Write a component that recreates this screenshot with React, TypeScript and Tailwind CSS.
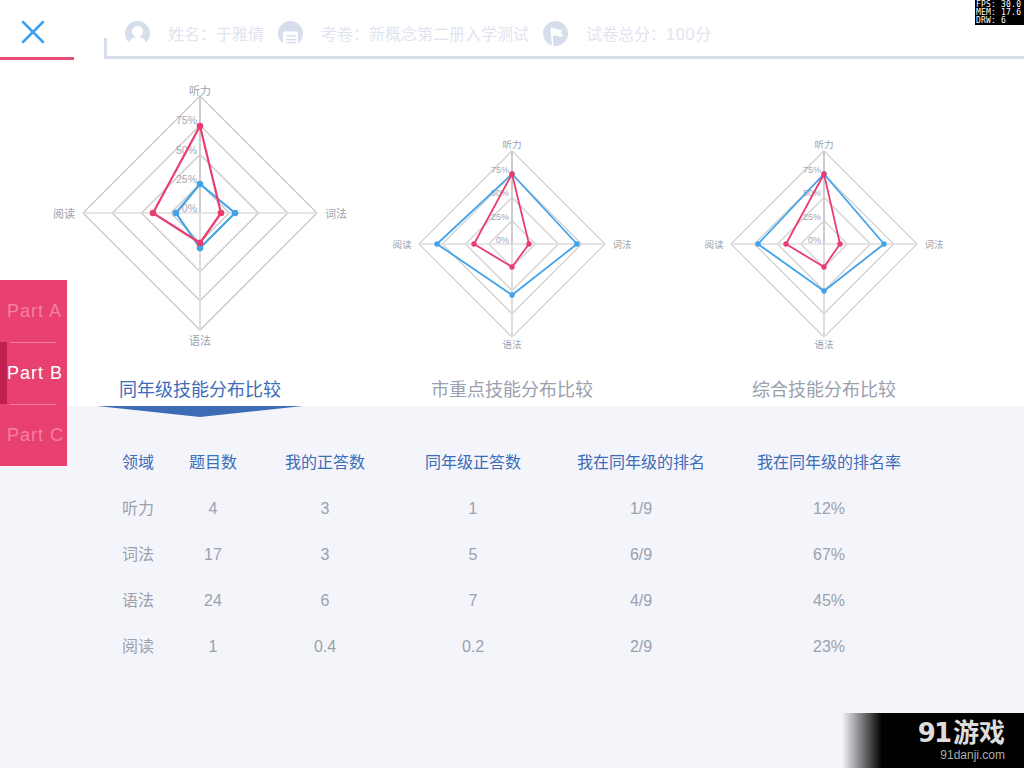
import React from 'react';

const sans = '"Liberation Sans", "Noto Sans CJK SC", sans-serif';

type Pts = { top: number; right: number; bottom: number; left: number };

const toPoints = (p: Pts, cx: number, cy: number): [number, number][] => [
  [cx, cy - p.top],
  [cx + p.right, cy],
  [cx, cy + p.bottom],
  [cx - p.left, cy],
];

const Series = ({ pts, color, dot }: { pts: [number, number][]; color: string; dot: number }) => (
  <g>
    <polygon points={pts.map((p) => p.join(',')).join(' ')} fill="none" stroke={color} strokeWidth={dot > 3 ? 2.2 : 1.8} strokeLinejoin="round" />
    {pts.map((p, i) => (
      <circle key={i} cx={p[0]} cy={p[1]} r={dot} fill={color} />
    ))}
  </g>
);

const Radar = ({
  cy,
  r,
  labelSize,
  pctSize,
  topGap,
  bottomGap,
  sideGap,
  gridColor,
  pctYs,
  blue,
  red,
  dot,
}: {
  cy: number;
  r: number;
  labelSize: number;
  pctSize: number;
  topGap: number;
  bottomGap: number;
  sideGap: number;
  gridColor: string;
  pctYs: number[];
  blue: Pts;
  red: Pts;
  dot: number;
}) => {
  const cx = 156;
  return (
    <svg width={312} height={318} viewBox="0 0 312 318" style={{ fontFamily: sans }}>
      {[0.25, 0.5, 0.75, 1].map((k) => {
        const d = r * k;
        return (
          <polygon
            key={k}
            points={`${cx},${cy - d} ${cx + d},${cy} ${cx},${cy + d} ${cx - d},${cy}`}
            fill="none"
            stroke={gridColor}
            strokeWidth={1.3}
          />
        );
      })}
      <line x1={cx} y1={cy - r} x2={cx} y2={cy} stroke="#cccccc" strokeWidth={2} />
      <line x1={cx} y1={cy} x2={cx} y2={cy + r} stroke="#dddddd" strokeWidth={2} />
      <line x1={cx - r} y1={cy} x2={cx + r} y2={cy} stroke="#dddddd" strokeWidth={1.5} />
      {['0%', '25%', '50%', '75%'].map((t, i) => (
        <text key={t} x={cx - 3} y={pctYs[i]} textAnchor="end" fontSize={pctSize} fill="#a3a8b5">
          {t}
        </text>
      ))}
      <text x={cx} y={cy - r - topGap} textAnchor="middle" fontSize={labelSize} fill="#9ba1ae">听力</text>
      <text x={cx} y={cy + r + bottomGap} textAnchor="middle" fontSize={labelSize} fill="#9ba1ae">语法</text>
      <text x={cx - r - sideGap} y={cy + labelSize / 2 - 1} textAnchor="end" fontSize={labelSize} fill="#9ba1ae">阅读</text>
      <text x={cx + r + sideGap} y={cy + labelSize / 2 - 1} fontSize={labelSize} fill="#9ba1ae">词法</text>
      <Series pts={toPoints(blue, cx, cy)} color="#43a3e8" dot={dot} />
      <Series pts={toPoints(red, cx, cy)} color="#e93d70" dot={dot} />
    </svg>
  );
};

const UserIcon = () => (
  <svg width={25} height={25} viewBox="0 0 25 25" className="shrink-0">
    <circle cx={12.5} cy={12.5} r={12.5} fill="#d6deec" />
    <circle cx={12.5} cy={10.5} r={5.5} fill="#fff" />
    <path d="M4 22c1-4 4-6 8.5-6s7.500 2 8.500 6c-2 2-5 3-8.500 3s-6.500-1-8.500-3z" fill="#fff" />
  </svg>
);

const PaperIcon = () => (
  <svg width={25} height={25} viewBox="0 0 25 25" className="shrink-0">
    <circle cx={12.5} cy={12.5} r={12.5} fill="#d6deec" />
    <path d="M5 11.5a1 1 0 0 1 1-1h13a1 1 0 0 1 1 1V25H5z" fill="#fff" />
    <path d="M8.300 15h10M8.300 18.500h10M8.300 21.500h10" stroke="#d6deec" strokeWidth={1.5} />
  </svg>
);

const FlagIcon = () => (
  <svg width={25} height={25} viewBox="0 0 25 25" className="shrink-0">
    <circle cx={12.5} cy={12.5} r={12.5} fill="#d6deec" />
    <path d="M7.500 6.500l1.500 18.500h1.500l-.7-10c2.200-1 4.200-.3 6.700.6 1.200.4 2.500.3 4-.4l-2.700-3.400 2.200-3.300c-1.500.7-2.800.8-4.200.3-2.800-1-5.300-1.800-8.300-2.300z" fill="#fff" />
  </svg>
);

const columns = ['领域', '题目数', '我的正答数', '同年级正答数', '我在同年级的排名', '我在同年级的排名率'];
const rows = [
  ['听力', '4', '3', '1', '1/9', '12%'],
  ['词法', '17', '3', '5', '6/9', '67%'],
  ['语法', '24', '6', '7', '4/9', '45%'],
  ['阅读', '1', '0.4', '0.2', '2/9', '23%'],
];

export default function App() {
  return (
    <div className="relative w-[1024px] h-[768px] overflow-hidden bg-white flex flex-col" style={{ fontFamily: sans }}>
      {/* header */}
      <div className="h-[60px] flex shrink-0">
        <div className="w-[74px] h-[60px] border-b-[3px] border-[#e74e78] flex justify-center pt-[20px]">
          <svg width={24} height={24} viewBox="0 0 24 24" className="-translate-x-[4px]">
            <path d="M2 2l20 20M22 2L2 22" stroke="#3c9ff0" strokeWidth={2.5} strokeLinecap="round" />
          </svg>
        </div>
        <div className="ml-[30px] flex-1 h-[21px] mt-[38px] border-l-[3px] border-b-[3px] border-[#d6deec]">
          <div className="flex items-center h-[25px] -mt-[17px] ml-[18px] text-base text-[#dfe4f0]">
            <UserIcon />
            <span className="ml-[18px] w-[110px] mt-[2px]">姓名：于雅倩</span>
            <PaperIcon />
            <span className="ml-[18px] w-[222px] mt-[2px]">考卷：新概念第二册入学测试</span>
            <FlagIcon />
            <span className="ml-[18px] mt-[2px]">试卷总分：<span className="tracking-[0.8px]">100</span>分</span>
          </div>
        </div>
      </div>

      {/* charts */}
      <div className="grid grid-cols-[312px_312px_312px] pl-[44px] h-[318px] shrink-0">
        <Radar
          cy={153}
          r={117}
          labelSize={11}
          pctSize={10.5}
          topGap={1}
          bottomGap={15}
          sideGap={8}
          gridColor="#c9c9c9"
          pctYs={[152, 123, 94, 64]}
          blue={{ top: 29, right: 35, bottom: 35, left: 24 }}
          red={{ top: 87, right: 21, bottom: 30, left: 47 }}
          dot={3.3}
        />
        <Radar
          cy={184}
          r={93}
          labelSize={9.5}
          pctSize={9}
          topGap={3}
          bottomGap={10.5}
          sideGap={7.5}
          gridColor="#d2d2d2"
          pctYs={[183, 160, 136, 113]}
          blue={{ top: 70, right: 65, bottom: 51, left: 75 }}
          red={{ top: 70, right: 17, bottom: 23, left: 38 }}
          dot={2.7}
        />
        <Radar
          cy={184}
          r={93}
          labelSize={9.5}
          pctSize={9}
          topGap={3}
          bottomGap={10.5}
          sideGap={7.5}
          gridColor="#d2d2d2"
          pctYs={[183, 160, 136, 113]}
          blue={{ top: 70, right: 60, bottom: 47, left: 66 }}
          red={{ top: 70, right: 16, bottom: 23, left: 38 }}
          dot={2.7}
        />
      </div>

      {/* tabs */}
      <div className="grid grid-cols-[312px_312px_312px] pl-[44px] h-[28px] shrink-0 text-lg leading-[25px] text-center text-[#9aa0ae]">
        <div className="relative text-[#3d6cb9]">
          同年级技能分布比较
          <svg width={206} height={11} viewBox="0 0 206 11" className="absolute left-[53px] top-[28px] z-10">
            <polygon points="0,0 206,0 103,11" fill="#3d6bb5" />
          </svg>
        </div>
        <div>市重点技能分布比较</div>
        <div>综合技能分布比较</div>
      </div>

      {/* table */}
      <div className="flex-1 bg-[#f3f5fa] pt-[34px] pl-[108px]">
        <div className="grid grid-cols-[60px_90px_134px_162px_174px_202px] w-max text-center auto-rows-[46px] items-center text-base text-[#9ba1ae]">
          {columns.map((c) => (
            <div key={c} className="text-[#3d6cb9]">{c}</div>
          ))}
          {rows.map((r) => r.map((v, i) => <div key={r[0] + i}>{v}</div>))}
        </div>
      </div>

      {/* side tabs */}
      <div className="absolute left-0 top-[280px] w-[67px] h-[186px] bg-[#e8406f] flex flex-col text-lg tracking-[1px] text-[#f57ea3]">
        <div className="h-[62px] flex items-center pl-[7px]">Part A</div>
        <div className="relative h-[62px] flex items-center pl-[7px] text-white">
          Part B
          <div className="absolute left-0 top-0 w-[7px] h-full bg-[#c01f50]" />
          <div className="absolute left-[10px] top-0 w-[46px] h-px bg-[#f77fa3]" />
          <div className="absolute left-[10px] bottom-[-1px] w-[46px] h-px bg-[#f77fa3]" />
        </div>
        <div className="h-[62px] flex items-center pl-[7px]">Part C</div>
      </div>

      {/* fps */}
      <div className="absolute right-0 top-0 w-[49px] h-[25px] bg-black text-white text-[8px] leading-[8px] pl-[1px] pt-[1px] tracking-[0.2px]" style={{ fontFamily: '"DejaVu Sans Mono", monospace' }}>
        <div>FPS: 30.0</div>
        <div>MEM: 17.6</div>
        <div>DRW: 6</div>
      </div>

      {/* watermark */}
      <div className="absolute right-0 bottom-0 w-[182px] h-[55px] bg-[linear-gradient(90deg,#f3f5fa_0%,#000_22%)] flex flex-col items-end pr-[19px] pt-[5px]">
        <div className="flex items-baseline text-[26px] leading-[30px] font-bold text-[#dddddd]">
          <span className="text-[26px] tracking-[-2px] mr-[3px]" style={{ fontFamily: '"DejaVu Sans", sans-serif' }}>91</span>
          游戏
        </div>
        <div className="text-xs leading-[14px] text-[#aaaaaa]">91danji.com</div>
      </div>
    </div>
  );
}
